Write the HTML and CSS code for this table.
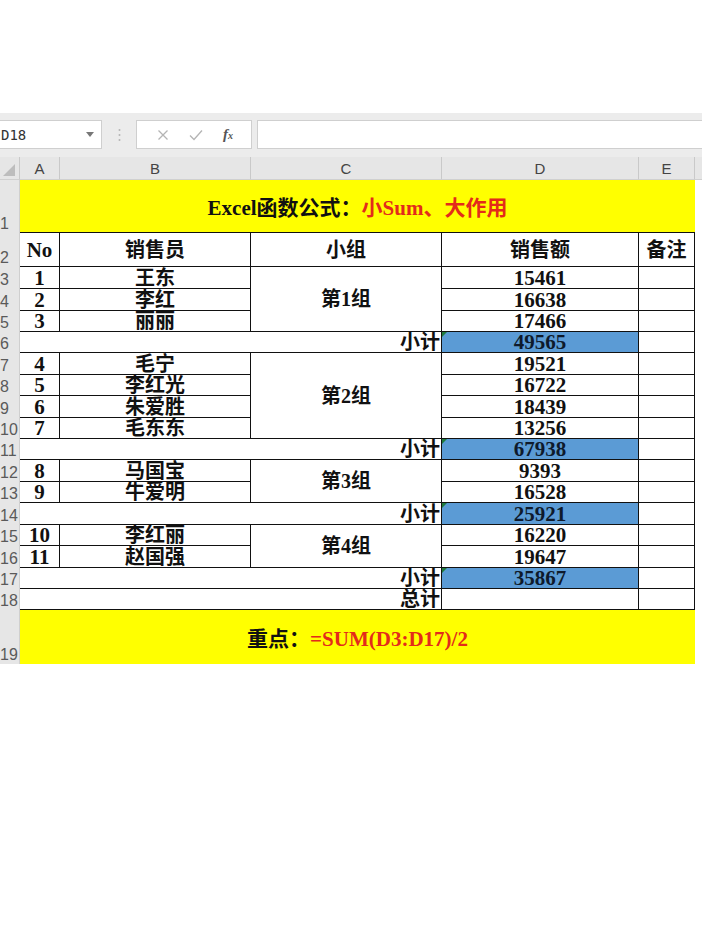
FILE: index.html
```html
<!DOCTYPE html>
<html lang="zh-CN">
<head>
<meta charset="utf-8">
<title>Excel函数公式</title>
<link rel="stylesheet" href="styles.css">
</head>
<body>
<div class="top"></div>
<div class="toolbar">
  <div class="namebox"><span class="ref">D18</span><svg class="dd" width="8" height="5" viewBox="0 0 8 5"><path d="M0 0H8L4 5Z" fill="#777"/></svg></div>
  <div class="sep"><svg width="3" height="14" viewBox="0 0 3 14"><circle cx="1.5" cy="2" r="1" fill="#b5b5b5"/><circle cx="1.5" cy="7" r="1" fill="#b5b5b5"/><circle cx="1.5" cy="12" r="1" fill="#b5b5b5"/></svg></div>
  <div class="fxbox">
    <svg class="ic" width="12" height="12" viewBox="0 0 12 12"><path d="M1.5 1.5L10.5 10.5M10.5 1.5L1.5 10.5" stroke="#b4b4b4" stroke-width="1.3" fill="none"/></svg>
    <svg class="ic" width="14" height="12" viewBox="0 0 14 12"><path d="M1 6.5L5 10.5L13 1.5" stroke="#b4b4b4" stroke-width="1.3" fill="none"/></svg>
    <span class="fx">f<small>x</small></span>
  </div>
  <div class="formula"></div>
</div>
<table class="sheet">
  <colgroup>
    <col class="c-rh"><col class="c-a"><col class="c-b"><col class="c-c"><col class="c-d"><col class="c-e"><col class="c-x">
  </colgroup>
  <tr class="hdr">
    <th class="corner"><svg width="12" height="12" viewBox="0 0 12 12"><path d="M12 0V12H0Z" fill="#bdbdbd"/></svg></th>
    <th>A</th><th>B</th><th>C</th><th>D</th><th>E</th><th class="hx"></th>
  </tr>
  <tr class="r1">
    <th class="rh">1</th>
    <td colspan="5" class="banner">Excel<span class="cj">函数公式：</span><span class="red">小Sum、大作用</span></td>
    <td class="x"></td>
  </tr>
  <tr class="r2">
    <th class="rh">2</th>
    <td class="b mid">No</td><td class="b mid cj">销售员</td><td class="b mid cj">小组</td><td class="b mid cj">销售额</td><td class="b mid cj">备注</td><td class="x"></td>
  </tr>
  <tr class="h22">
    <th class="rh">3</th>
    <td class="b">1</td><td class="b cj">王东</td><td class="b mid cj" rowspan="3">第1组</td><td class="b">15461</td><td class="b"></td><td class="x"></td>
  </tr>
  <tr class="h22">
    <th class="rh">4</th>
    <td class="b">2</td><td class="b cj">李红</td><td class="b">16638</td><td class="b"></td><td class="x"></td>
  </tr>
  <tr class="h21">
    <th class="rh">5</th>
    <td class="b">3</td><td class="b cj">丽丽</td><td class="b">17466</td><td class="b"></td><td class="x"></td>
  </tr>
  <tr class="h21">
    <th class="rh">6</th>
    <td class="b right cj" colspan="3">小计</td><td class="b blue">49565</td><td class="b"></td><td class="x"></td>
  </tr>
  <tr class="h22">
    <th class="rh">7</th>
    <td class="b">4</td><td class="b cj">毛宁</td><td class="b mid cj" rowspan="4">第2组</td><td class="b">19521</td><td class="b"></td><td class="x"></td>
  </tr>
  <tr class="h21">
    <th class="rh">8</th>
    <td class="b">5</td><td class="b cj">李红光</td><td class="b">16722</td><td class="b"></td><td class="x"></td>
  </tr>
  <tr class="h22">
    <th class="rh">9</th>
    <td class="b">6</td><td class="b cj">朱爱胜</td><td class="b">18439</td><td class="b"></td><td class="x"></td>
  </tr>
  <tr class="h21">
    <th class="rh">10</th>
    <td class="b">7</td><td class="b cj">毛东东</td><td class="b">13256</td><td class="b"></td><td class="x"></td>
  </tr>
  <tr class="h21">
    <th class="rh">11</th>
    <td class="b right cj" colspan="3">小计</td><td class="b blue">67938</td><td class="b"></td><td class="x"></td>
  </tr>
  <tr class="h22">
    <th class="rh">12</th>
    <td class="b">8</td><td class="b cj">马国宝</td><td class="b mid cj" rowspan="2">第3组</td><td class="b">9393</td><td class="b"></td><td class="x"></td>
  </tr>
  <tr class="h21">
    <th class="rh">13</th>
    <td class="b">9</td><td class="b cj">牛爱明</td><td class="b">16528</td><td class="b"></td><td class="x"></td>
  </tr>
  <tr class="h22">
    <th class="rh">14</th>
    <td class="b right cj" colspan="3">小计</td><td class="b blue">25921</td><td class="b"></td><td class="x"></td>
  </tr>
  <tr class="h21">
    <th class="rh">15</th>
    <td class="b">10</td><td class="b cj">李红丽</td><td class="b mid cj" rowspan="2">第4组</td><td class="b">16220</td><td class="b"></td><td class="x"></td>
  </tr>
  <tr class="h22">
    <th class="rh">16</th>
    <td class="b">11</td><td class="b cj">赵国强</td><td class="b">19647</td><td class="b"></td><td class="x"></td>
  </tr>
  <tr class="h21">
    <th class="rh">17</th>
    <td class="b right cj" colspan="3">小计</td><td class="b blue">35867</td><td class="b"></td><td class="x"></td>
  </tr>
  <tr class="h21">
    <th class="rh">18</th>
    <td class="b right cj" colspan="3">总计</td><td class="b"></td><td class="b"></td><td class="x"></td>
  </tr>
  <tr class="r19">
    <th class="rh">19</th>
    <td colspan="5" class="banner"><span class="cj">重点：</span><span class="red">=SUM(D3:D17)/2</span></td>
    <td class="x"></td>
  </tr>
</table>
</body>
</html>
```

FILE: styles.css
```css
* { box-sizing: border-box; }

body {
  margin: 0;
  background: #ffffff;
  font-family: "Liberation Serif", "Noto Sans CJK SC", serif;
}

.top { height: 113px; }

.toolbar {
  height: 44px;
  background: #ececec;
  display: flex;
  align-items: flex-start;
  padding-top: 7px;
}

.namebox {
  width: 102px;
  height: 29px;
  background: #fff;
  border: 1px solid #cfcfcf;
  border-left: none;
  display: flex;
  align-items: center;
  justify-content: space-between;
  padding: 0 7px 0 1px;
}

.ref {
  font-family: "DejaVu Sans Mono", monospace;
  font-size: 14px;
  color: #333;
}

.sep {
  width: 34px;
  height: 29px;
  display: flex;
  align-items: center;
  justify-content: center;
}

.fxbox {
  width: 116px;
  height: 29px;
  background: #fff;
  border: 1px solid #cfcfcf;
  display: flex;
  align-items: center;
  justify-content: space-around;
  padding: 0 8px 0 10px;
}

.fx {
  font-family: "Liberation Serif", serif;
  font-style: italic;
  font-weight: bold;
  font-size: 15px;
  color: #555;
}

.fx small { font-size: 10px; }

.formula {
  flex: 1;
  margin-left: 5px;
  height: 29px;
  background: #fff;
  border: 1px solid #cfcfcf;
  border-right: none;
}

.sheet {
  border-collapse: separate;
  border-spacing: 0;
  table-layout: fixed;
  width: 702px;
}

.c-rh { width: 20px; }
.c-a { width: 40px; }
.c-b { width: 191px; }
.c-c { width: 191px; }
.c-d { width: 197px; }
.c-e { width: 56px; }
.c-x { width: 7px; }

.sheet td, .sheet th {
  padding: 0;
  white-space: nowrap;
  overflow: visible;
}

.hdr th {
  height: 23px;
  background: #e6e6e6;
  border-right: 1px solid #c9c9c9;
  border-bottom: 1px solid #d0d0d0;
  font-family: "Liberation Sans", sans-serif;
  font-weight: normal;
  font-size: 15px;
  color: #444;
  text-align: center;
  vertical-align: middle;
}

.hdr th.corner {
  text-align: right;
  padding-right: 4px;
  vertical-align: bottom;
  padding-bottom: 3px;
}

.hdr th.corner svg { display: block; margin-left: auto; }

.hdr th.hx { border-right: none; }

.rh {
  background: #e6e6e6;
  border-right: 1px solid #cfcfcf;
  font-family: "Liberation Sans", sans-serif;
  font-weight: normal;
  font-size: 16px;
  line-height: 16px;
  color: #5a5a5a;
  text-align: center;
  vertical-align: bottom;
  padding: 0 10px 1px 0 !important;
}

.r1 { height: 53px; }
.r2 { height: 34px; }
.h21 { height: 21px; }
.h22 { height: 22px; }
.r19 { height: 54px; }

.banner {
  background: #ffff00;
  text-align: center;
  vertical-align: middle;
  font-weight: bold;
  font-size: 21px;
  color: #111;
}

.r1 .banner { border-bottom: 1px solid #111; }

.red { color: #e32b1b; }

.b {
  border-right: 1px solid #111;
  border-bottom: 1px solid #111;
  text-align: center;
  vertical-align: bottom;
  font-weight: bold;
  font-size: 21px;
  line-height: 19px;
  color: #111;
}

.cj { font-weight: 600; font-size: 20px; }
.banner .cj, .banner .red { font-size: 21px; }

.b.mid { vertical-align: middle; line-height: 24px; }

.b.right { text-align: right; padding-right: 1px; }

.blue {
  background: #5b9bd5;
  position: relative;
  color: #0e1a2c;
}

.blue::before {
  content: "";
  position: absolute;
  left: 0;
  top: 0;
  border-top: 5px solid #1f7a3c;
  border-right: 5px solid transparent;
}

.x { background: #fff; }
```
